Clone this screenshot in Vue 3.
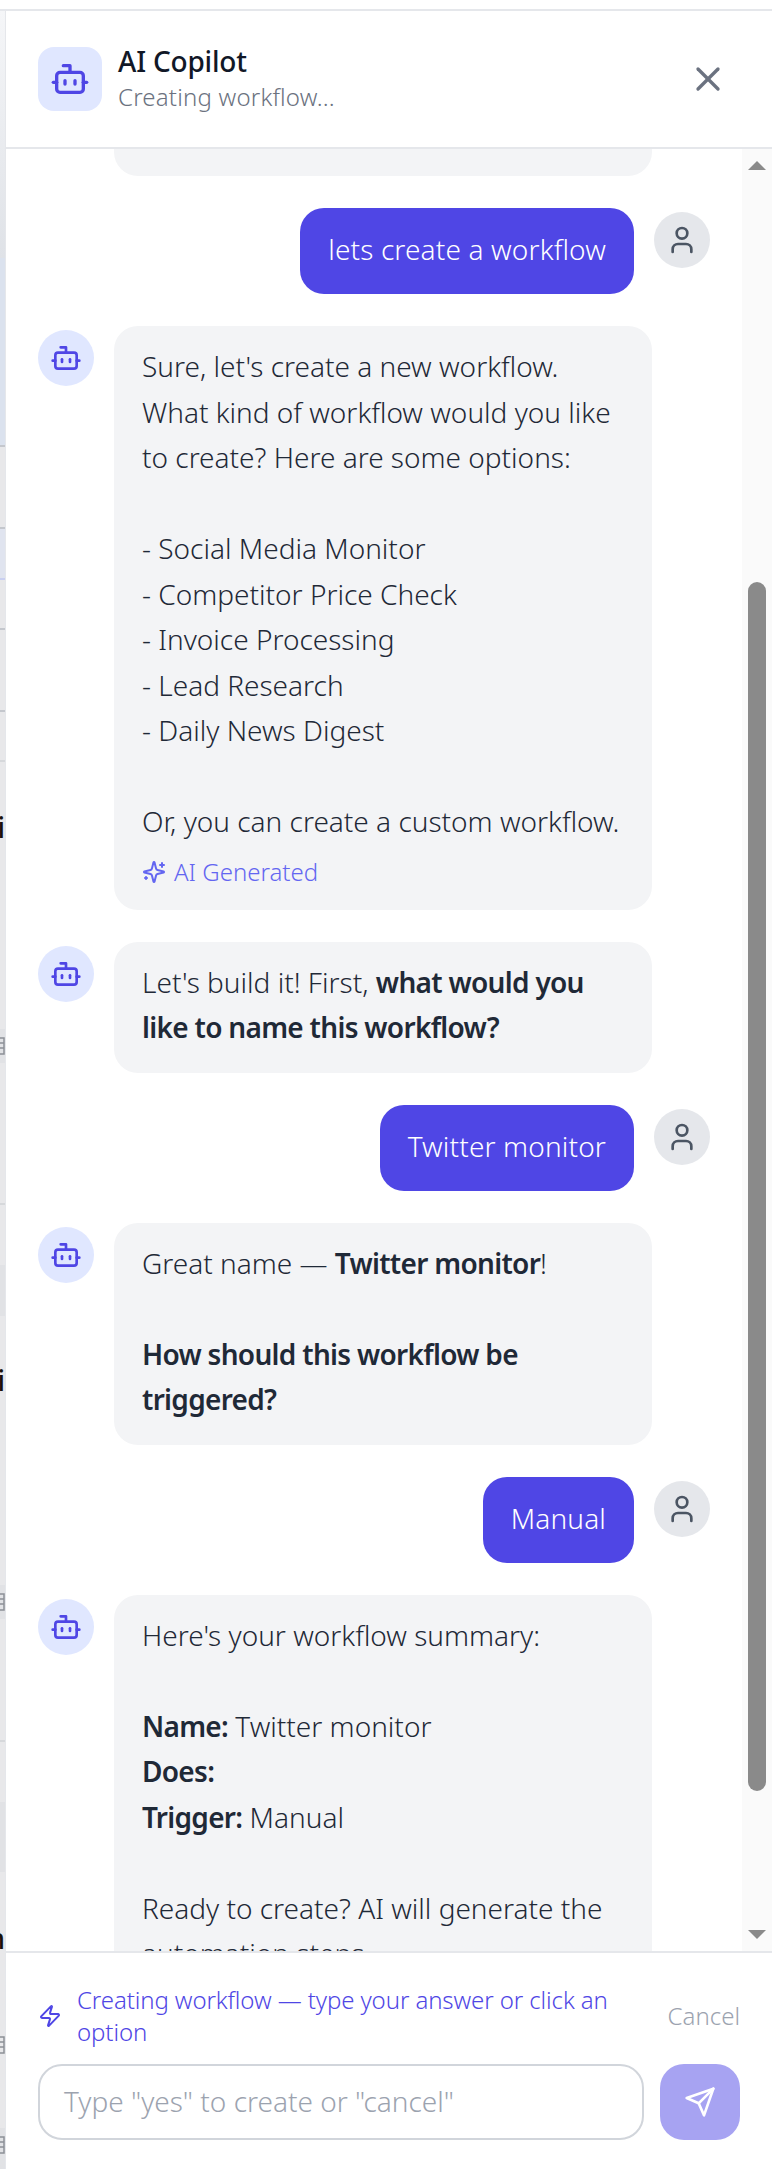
<script setup>
const robotPaths = ['M12 8V4H8', 'M2 14h2', 'M20 14h2', 'M15 13v2', 'M9 13v2']

const strip = [
  { h: 247, kind: 'fade' },
  { h: 187, kind: 'blue' },
  { h: 2, kind: 'line' },
  { h: 80, kind: 'gray' },
  { h: 2, kind: 'line' },
  { h: 49, kind: 'blue2' },
  { h: 2, kind: 'lav' },
  { h: 48, kind: 'gray' },
  { h: 2, kind: 'line' },
  { h: 80, kind: 'gray' },
  { h: 2, kind: 'line' },
  { h: 48, kind: 'gray' },
  { h: 2, kind: 'faint' },
  { h: 45, kind: 'gray' },
  { h: 40, kind: 'gray', text: 'i' },
  { h: 182, kind: 'gray' },
  { h: 34, kind: 'band', icon: true },
  { h: 140, kind: 'gray' },
  { h: 2, kind: 'faint' },
  { h: 60, kind: 'gray' },
  { h: 51, kind: 'band' },
  { h: 44, kind: 'gray' },
  { h: 40, kind: 'gray', text: 'i' },
  { h: 185, kind: 'gray' },
  { h: 34, kind: 'band', icon: true },
  { h: 121, kind: 'gray' },
  { h: 2, kind: 'faint' },
  { h: 60, kind: 'gray' },
  { h: 70, kind: 'band' },
  { h: 46, kind: 'gray' },
  { h: 40, kind: 'gray', text: 'n' },
  { h: 70, kind: 'gray' },
  { h: 40, kind: 'gray', icon: true },
  { h: 60, kind: 'gray' },
  { h: 41, kind: 'band', icon: true }
]
</script>

<template>
  <div class="page">
    <div class="frame">
      <div class="backdrop">
        <div v-for="(s, i) in strip" :key="i" class="seg" :class="s.kind" :style="{ height: s.h + 'px' }">
          <span v-if="s.text" class="under">{{ s.text }}</span>
          <svg v-if="s.icon" class="under-icon" width="5" height="24" viewBox="0 0 5 24" fill="none" stroke="#8c9096" stroke-width="1.5"><path d="M0 4h4v16H0M0 9h4M0 14h4" /></svg>
        </div>
      </div>
      <section class="panel">
        <header class="head">
          <div class="head-icon">
            <svg width="40" height="40" viewBox="0 0 24 24" fill="none" stroke="#4f46e5" stroke-width="2" stroke-linecap="round" stroke-linejoin="round">
              <path v-for="p in robotPaths" :key="p" :d="p" />
              <rect x="4" y="8" width="16" height="12" rx="2" />
            </svg>
          </div>
          <div class="head-text">
            <div class="title">AI Copilot</div>
            <div class="sub">Creating workflow...</div>
          </div>
          <svg class="close" width="40" height="40" viewBox="0 0 24 24" fill="none" stroke="#6b7280" stroke-width="2" stroke-linecap="round" stroke-linejoin="round">
            <path d="M18 6 6 18" /><path d="m6 6 12 12" />
          </svg>
        </header>

        <div class="chat">
          <div class="messages">
            <div class="partial"></div>

            <div class="row user">
              <div class="bubble-u">lets create a workflow</div>
              <div class="avatar-u"><svg width="32" height="32" viewBox="0 0 24 24" fill="none" stroke="#4b5563" stroke-width="2" stroke-linecap="round" stroke-linejoin="round"><path d="M19 21v-2a4 4 0 0 0-4-4H9a4 4 0 0 0-4 4v2" /><circle cx="12" cy="7" r="4" /></svg></div>
            </div>

            <div class="row bot">
              <div class="avatar-b"><svg width="32" height="32" viewBox="0 0 24 24" fill="none" stroke="#4f46e5" stroke-width="2" stroke-linecap="round" stroke-linejoin="round"><path v-for="p in robotPaths" :key="p" :d="p" /><rect x="4" y="8" width="16" height="12" rx="2" /></svg></div>
              <div class="bubble-b">
                <p>Sure, let's create a new workflow. What kind of workflow would you like to create? Here are some options:</p>
                <p class="gap">- Social Media Monitor<br>- Competitor Price Check<br>- Invoice Processing<br>- Lead Research<br>- Daily News Digest</p>
                <p class="gap">Or, you can create a custom workflow.</p>
                <div class="gen">
                  <svg width="24" height="24" viewBox="0 0 24 24" fill="none" stroke="#6366f1" stroke-width="2" stroke-linecap="round" stroke-linejoin="round"><path d="M9.937 15.5A2 2 0 0 0 8.5 14.063l-6.135-1.582a.5.5 0 0 1 0-.962L8.5 9.936A2 2 0 0 0 9.937 8.5l1.582-6.135a.5.5 0 0 1 .963 0L14.063 8.5A2 2 0 0 0 15.5 9.937l6.135 1.581a.5.5 0 0 1 0 .964L15.5 14.063a2 2 0 0 0-1.437 1.437l-1.582 6.135a.5.5 0 0 1-.963 0z" /><path d="M20 3v4" /><path d="M22 5h-4" /><path d="M4 17v2" /><path d="M5 18H3" /></svg>
                  <span>AI Generated</span>
                </div>
              </div>
            </div>

            <div class="row bot">
              <div class="avatar-b"><svg width="32" height="32" viewBox="0 0 24 24" fill="none" stroke="#4f46e5" stroke-width="2" stroke-linecap="round" stroke-linejoin="round"><path v-for="p in robotPaths" :key="p" :d="p" /><rect x="4" y="8" width="16" height="12" rx="2" /></svg></div>
              <div class="bubble-b"><p>Let's build it! First, <b>what would you like to name this workflow?</b></p></div>
            </div>

            <div class="row user">
              <div class="bubble-u">Twitter monitor</div>
              <div class="avatar-u"><svg width="32" height="32" viewBox="0 0 24 24" fill="none" stroke="#4b5563" stroke-width="2" stroke-linecap="round" stroke-linejoin="round"><path d="M19 21v-2a4 4 0 0 0-4-4H9a4 4 0 0 0-4 4v2" /><circle cx="12" cy="7" r="4" /></svg></div>
            </div>

            <div class="row bot">
              <div class="avatar-b"><svg width="32" height="32" viewBox="0 0 24 24" fill="none" stroke="#4f46e5" stroke-width="2" stroke-linecap="round" stroke-linejoin="round"><path v-for="p in robotPaths" :key="p" :d="p" /><rect x="4" y="8" width="16" height="12" rx="2" /></svg></div>
              <div class="bubble-b">
                <p>Great name — <b>Twitter monitor</b>!</p>
                <p class="gap"><b>How should this workflow be triggered?</b></p>
              </div>
            </div>

            <div class="row user">
              <div class="bubble-u">Manual</div>
              <div class="avatar-u"><svg width="32" height="32" viewBox="0 0 24 24" fill="none" stroke="#4b5563" stroke-width="2" stroke-linecap="round" stroke-linejoin="round"><path d="M19 21v-2a4 4 0 0 0-4-4H9a4 4 0 0 0-4 4v2" /><circle cx="12" cy="7" r="4" /></svg></div>
            </div>

            <div class="row bot">
              <div class="avatar-b"><svg width="32" height="32" viewBox="0 0 24 24" fill="none" stroke="#4f46e5" stroke-width="2" stroke-linecap="round" stroke-linejoin="round"><path v-for="p in robotPaths" :key="p" :d="p" /><rect x="4" y="8" width="16" height="12" rx="2" /></svg></div>
              <div class="bubble-b">
                <p>Here's your workflow summary:</p>
                <p class="gap"><b>Name:</b> Twitter monitor<br><b>Does:</b><br><b>Trigger:</b> Manual</p>
                <p class="gap">Ready to create? AI will generate the automation steps.</p>
              </div>
            </div>
          </div>

          <div class="scrollbar">
            <div class="arrow up"></div>
            <div class="space-a"></div>
            <div class="thumb"></div>
            <div class="space-b"></div>
            <div class="arrow down"></div>
          </div>
        </div>

        <footer class="foot">
          <div class="hint">
            <svg class="zap" width="24" height="24" viewBox="0 0 24 24" fill="none" stroke="#4f46e5" stroke-width="2" stroke-linecap="round" stroke-linejoin="round"><path d="M4 14a1 1 0 0 1-.78-1.63l9.9-10.2a.5.5 0 0 1 .86.46l-1.92 6.02A1 1 0 0 0 13 10h7a1 1 0 0 1 .78 1.63l-9.9 10.2a.5.5 0 0 1-.86-.46l1.92-6.02A1 1 0 0 0 11 14z" /></svg>
            <span class="hint-text">Creating workflow — type your answer or click an option</span>
            <span class="cancel">Cancel</span>
          </div>
          <div class="entry">
            <div class="field">Type "yes" to create or "cancel"</div>
            <div class="send">
              <svg width="32" height="32" viewBox="0 0 24 24" fill="none" stroke="#fff" stroke-width="2" stroke-linecap="round" stroke-linejoin="round"><path d="m22 2-7 20-4-9-9-4Z" /><path d="M22 2 11 13" /></svg>
            </div>
          </div>
        </footer>
      </section>
    </div>
  </div>
</template>

<style>
html, body { margin: 0; background: #fff; }
</style>

<style scoped>
.page { width: 772px; height: 2169px; overflow: hidden; font-family: "Noto Sans", "Open Sans", sans-serif; background: #fff; box-sizing: border-box; padding-top: 9px; }
.frame { height: 100%; box-sizing: border-box; border-top: 2px solid #e5e7eb; display: flex; }
.backdrop { width: 5px; flex: none; display: flex; flex-direction: column; overflow: hidden; background: #e8e8ea; border-right: 1px solid #e5e7eb; }
.seg { flex: none; position: relative; overflow: hidden; }
.fade { background: linear-gradient(#f5f6f8, #dfe2e7); }
.blue { background: #dbe2ee; }
.blue2 { background: #e0e4ef; }
.line { background: #c4c7cd; }
.lav { background: #c9cff0; }
.faint { background: #d6d8db; }
.gray { background: #e8e8ea; }
.band { background: #e1e2e5; }
.under { position: absolute; right: 0; top: 2px; font-size: 28px; line-height: 36px; font-weight: 500; color: #1a1208; }
.under-icon { position: absolute; left: 0; top: 5px; }
.panel { flex: 1; min-width: 0; display: flex; flex-direction: column; background: #fff; }
.head { flex: none; box-sizing: border-box; border-bottom: 2px solid #e5e7eb; display: flex; align-items: center; padding: 0 44px 0 32px; gap: 16px; height: 138px; }
.head-icon { width: 64px; height: 64px; border-radius: 16px; background: #e0e7ff; display: flex; align-items: center; justify-content: center; flex: none; }
.head-text { flex: 1; min-width: 0; padding-bottom: 2px; }
.title { font-size: 28px; line-height: 34px; font-weight: 500; color: #111827; letter-spacing: -0.2px; }
.sub { font-size: 24px; line-height: 32px; font-weight: 300; color: #6b7280; letter-spacing: 0.2px; margin-top: 3px; }
.close { flex: none; }
.chat { flex: 1; min-height: 0; display: flex; }
.messages { flex: 1; min-width: 0; overflow: hidden; display: flex; flex-direction: column; gap: 32px; padding: 0 32px; }
.partial { height: 27px; flex: none; margin-left: 76px; width: 538px; background: #f3f4f6; border-radius: 0 0 24px 24px; }
.row { display: flex; flex: none; }
.row.user { justify-content: flex-end; gap: 20px; }
.row.bot { gap: 20px; }
.bubble-u { background: #4f46e5; color: #fff; font-size: 28px; line-height: 46px; font-weight: 300; letter-spacing: 0.15px; padding: 18px 28px 22px; border-radius: 24px; }
.bubble-b { width: 538px; box-sizing: border-box; background: #f3f4f6; color: #1f2937; font-size: 28px; line-height: 45.5px; font-weight: 300; padding: 18px 28px 22px; border-radius: 24px; }
.bubble-b p { margin: 0; }
.bubble-b p.gap { margin-top: 45.5px; }
.bubble-b b { font-weight: 600; letter-spacing: -0.7px; }
.avatar-u, .avatar-b { width: 56px; height: 56px; border-radius: 50%; display: flex; align-items: center; justify-content: center; flex: none; margin-top: 4px; }
.avatar-u { background: #e5e7eb; }
.avatar-b { background: #e0e7ff; }
.gen { display: flex; align-items: center; gap: 8px; margin-top: 11px; font-size: 24px; line-height: 32px; font-weight: 300; color: #6366f1; }
.scrollbar { width: 30px; flex: none; background: #fafafa; display: flex; flex-direction: column; align-items: center; }
.arrow { width: 0; height: 0; border-left: 9px solid transparent; border-right: 9px solid transparent; flex: none; }
.arrow.up { border-bottom: 9px solid #8a8a8a; margin-top: 12px; }
.arrow.down { border-top: 9px solid #8a8a8a; margin-bottom: 12px; }
.space-a { height: 412px; flex: none; }
.thumb { width: 18px; height: 1209px; background: #8a8a8a; border-radius: 9px; flex: none; }
.space-b { flex: 1; }
.foot { flex: none; height: 218px; box-sizing: border-box; border-top: 2px solid #e5e7eb; padding: 31px 32px 0; display: flex; flex-direction: column; gap: 16px; }
.hint { display: flex; align-items: center; gap: 15px; }
.zap { flex: none; }
.hint-text { flex: 1; font-size: 24px; line-height: 32px; font-weight: 300; letter-spacing: -0.1px; color: #4f46e5; }
.cancel { flex: none; font-size: 24px; line-height: 32px; font-weight: 300; color: #9ca3af; margin-left: 9px; }
.entry { display: flex; gap: 16px; align-items: stretch; }
.field { flex: 1; height: 76px; box-sizing: border-box; border: 2px solid #d1d5db; border-radius: 24px; padding: 0 24px 2px; display: flex; align-items: center; font-size: 28px; font-weight: 300; color: #9ca3af; }
.send { width: 80px; height: 76px; border-radius: 24px; background: #a7a3f2; display: flex; align-items: center; justify-content: center; flex: none; }
</style>
